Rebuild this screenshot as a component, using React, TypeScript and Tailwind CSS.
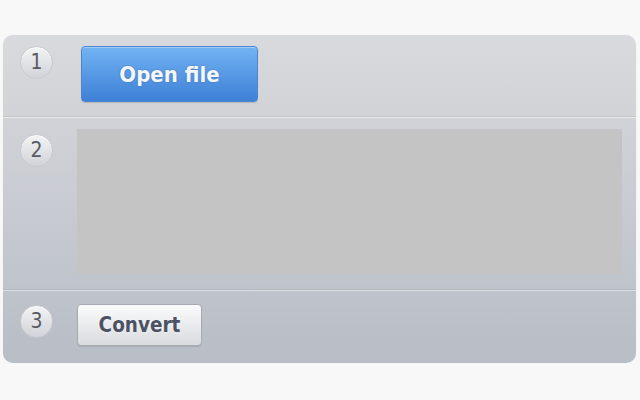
import React from "react";

const font = { fontFamily: '"DejaVu Sans Condensed", "DejaVu Sans", Tahoma, sans-serif' };

function Num({ n }: { n: number }) {
  return (
    <div
      className="w-[33px] h-[33px] rounded-full flex items-center justify-center text-[21px] text-[#585b61] border border-[#c6c9ce] bg-gradient-to-b from-[#f3f4f5] to-[#d0d3d8] shadow-[inset_0_1px_0_#ffffff] shrink-0"
      style={font}
    >
      {n}
    </div>
  );
}

export default function App() {
  return (
    <div className="w-[640px] h-[400px] bg-[#f8f8f8] pt-[35px] pl-[3px]">
      <div className="w-[633px] h-[328px] rounded-[10px] bg-gradient-to-b from-[#d9dadd] to-[#b8bdc6] flex flex-col overflow-hidden shadow-[0_0_1px_rgba(0,0,0,0.15)]">
        <div className="h-[82px] flex items-start border-b border-[#c3c5c9] shrink-0">
          <div className="pl-[17px] pt-[11px] w-[78px]">
            <Num n={1} />
          </div>
          <button
            className="mt-[11px] w-[177px] h-[56px] rounded-[4px] bg-gradient-to-b from-[#72b3f3] to-[#3e80d6] border border-[#4a86d4] text-[#f4f6fa] text-[22px] font-bold shadow-[inset_0_1px_0_rgba(255,255,255,0.35),0_1px_1px_rgba(0,0,0,0.15)] [text-shadow:0_0_2px_rgba(0,0,0,0.25)]"
            style={font}
          >
            Open file
          </button>
        </div>
        <div className="h-[1px] bg-[#e9eaed] shrink-0" />
        <div className="h-[172px] flex items-start border-b border-[#b1b5bc] shrink-0">
          <div className="pl-[17px] pt-[16px] w-[74px]">
            <Num n={2} />
          </div>
          <div className="mt-[11px] w-[545px] h-[145px] bg-[#c4c4c4]" />
        </div>
        <div className="h-[1px] bg-[#dcdee2] shrink-0" />
        <div className="flex-1 flex items-start">
          <div className="pl-[17px] pt-[14px] w-[74px]">
            <Num n={3} />
          </div>
          <button
            className="mt-[13px] w-[125px] h-[42px] rounded-[4px] bg-gradient-to-b from-[#fbfbfc] to-[#d9dbde] border border-[#a7abb1] text-[#4b5263] text-[20.5px] font-bold shadow-[0_1px_1px_rgba(0,0,0,0.1)] [text-shadow:0_0_2px_rgba(255,255,255,0.9)]"
            style={font}
          >
            Convert
          </button>
        </div>
      </div>
    </div>
  );
}
